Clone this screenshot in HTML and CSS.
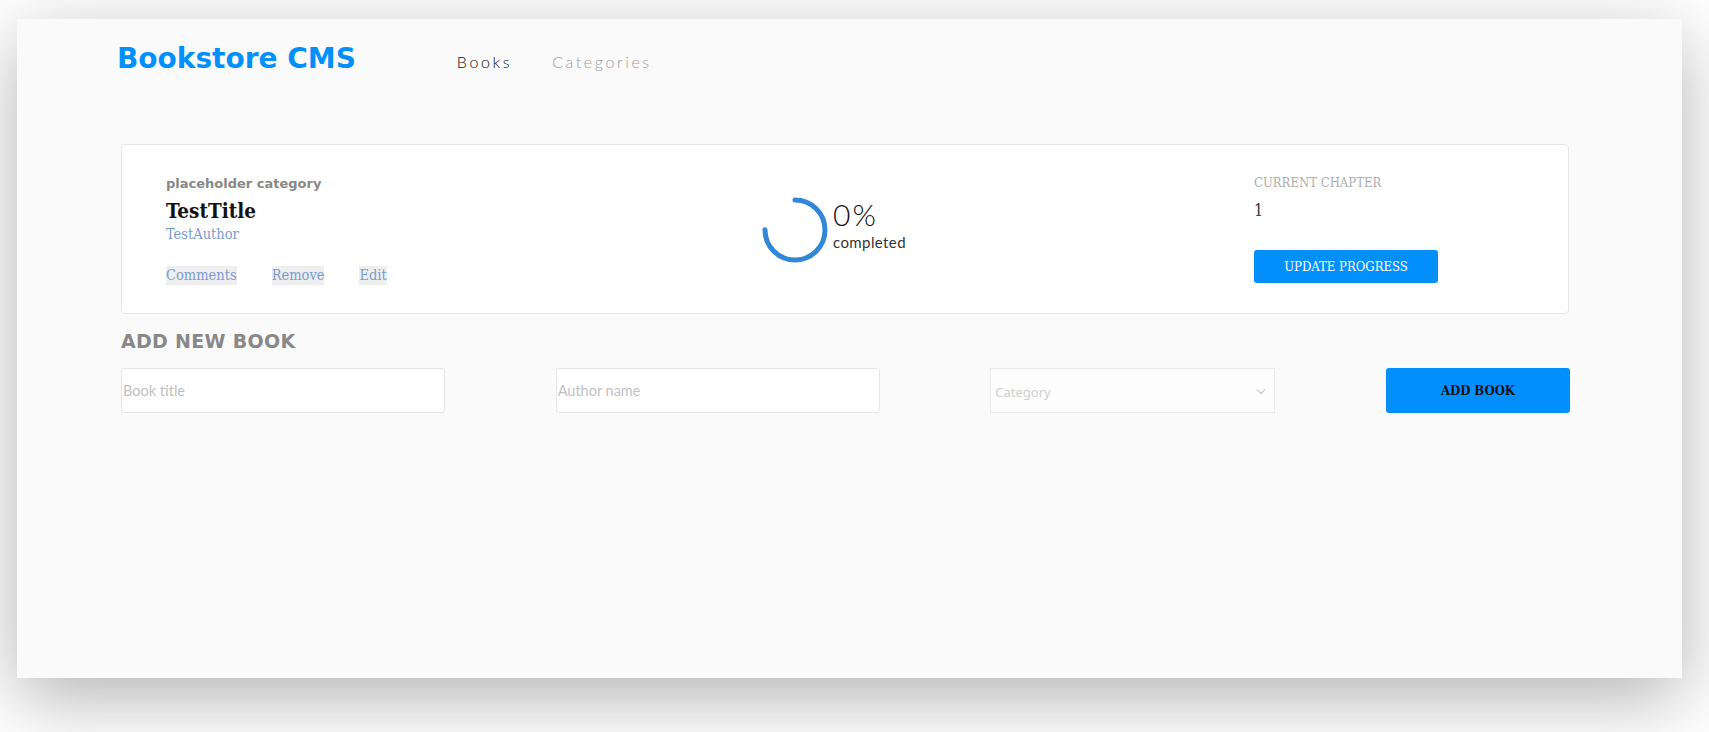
FILE: index.html
```html
<!DOCTYPE html>
<html lang="en">
<head>
<meta charset="utf-8">
<title>Bookstore CMS</title>
<link rel="stylesheet" href="styles.css">
</head>
<body>
<div class="panel">
  <header class="header">
    <h1 class="logo">Bookstore CMS</h1>
    <nav class="nav">
      <a class="nav-link active" href="#">Books</a>
      <a class="nav-link" href="#">Categories</a>
    </nav>
  </header>
  <main class="main">
    <div class="card">
      <div class="book-info">
        <p class="category">placeholder category</p>
        <h2 class="title">TestTitle</h2>
        <p class="author">TestAuthor</p>
        <div class="actions">
          <button class="action" type="button">Comments</button>
          <button class="action" type="button">Remove</button>
          <button class="action" type="button">Edit</button>
        </div>
      </div>
      <div class="progress">
        <svg class="ring" width="66" height="66" viewBox="0 0 66 66">
          <circle cx="33" cy="33" r="30" fill="none" stroke="#3287d8" stroke-width="5" stroke-linecap="round" stroke-dasharray="141.4 200" transform="rotate(-90 33 33)"/>
        </svg>
        <div class="progress-text">
          <span class="percent">0%</span>
          <span class="completed">completed</span>
        </div>
      </div>
      <div class="chapter">
        <p class="chapter-label">CURRENT CHAPTER</p>
        <p class="chapter-num">1</p>
        <button class="update-btn" type="button">UPDATE PROGRESS</button>
      </div>
    </div>
    <section class="add-book">
      <h3 class="add-title">ADD NEW BOOK</h3>
      <form class="add-form">
        <input class="field field-title" type="text" placeholder="Book title">
        <input class="field field-author" type="text" placeholder="Author name">
        <div class="select-wrap">
          <span class="select-placeholder">Category</span>
          <svg class="chevron" width="10" height="7" viewBox="0 0 10 7"><path d="M1 1.5 L5 5.5 L9 1.5" fill="none" stroke="#cfcfcf" stroke-width="1.4"/></svg>
        </div>
        <button class="add-btn" type="button">ADD BOOK</button>
      </form>
    </section>
  </main>
</div>
</body>
</html>
```
FILE: styles.css
```css
* { box-sizing: border-box; }
html, body { margin: 0; padding: 0; }
body {
  background: #ffffff;
  padding: 19px 27px 0 17px;
  height: 732px;
  overflow: hidden;
  font-family: "Lato", "Inter", sans-serif;
}
.panel {
  width: 1665px;
  height: 659px;
  background: #fafafa;
  box-shadow: 0 20px 70px rgba(0, 0, 0, 0.3);
}
.header {
  display: flex;
  align-items: baseline;
  padding: 23px 0 0 100px;
}
.logo {
  margin: 0;
  font-family: "DejaVu Sans", sans-serif;
  font-weight: 700;
  font-size: 28px;
  line-height: 34px;
  color: #0290ff;
}
.nav {
  display: flex;
  gap: 40px;
  margin-left: 101px;
}
.nav-link {
  font-family: "Lato", sans-serif;
  font-weight: 300;
  font-size: 16px;
  line-height: 20px;
  letter-spacing: 2.6px;
  color: #9a9a9a;
  text-decoration: none;
}
.nav-link.active { color: #121212; }

.main {
  padding: 68px 0 0 104px;
  width: 1552px;
}
.card {
  display: grid;
  grid-template-columns: 598px 490px 1fr;
  align-items: center;
  background: #fff;
  border: 1px solid #e8e8e8;
  border-radius: 4px;
  padding: 30px 45px 28px 44px;
  height: 170px;
}
.book-info p, .chapter p { margin: 0; }
.category {
  font-family: "DejaVu Sans", sans-serif;
  font-weight: 700;
  font-size: 13px;
  line-height: 17px;
  color: #888;
}
.title {
  margin: 7px 0 0;
  font-family: "DejaVu Serif", serif;
  font-stretch: condensed;
  font-weight: 700;
  font-size: 20.5px;
  line-height: 24px;
  color: #121212;
}
.author {
  margin-top: 3px !important;
  font-family: "DejaVu Serif", serif;
  font-stretch: condensed;
  font-size: 14.5px;
  line-height: 16px;
  color: #7a9bd0;
}
.actions {
  display: flex;
  gap: 35px;
  margin-top: 24px;
}
.action {
  border: 0;
  margin: 0;
  padding: 0;
  background: #eeeeee;
  font-family: "DejaVu Serif", serif;
  font-stretch: condensed;
  font-size: 14.5px;
  line-height: 19px;
  height: 19px;
  color: #7a9bd0;
}
.progress {
  display: flex;
  align-items: flex-start;
  gap: 5px;
  margin-left: -2px;
}
.ring { display: block; flex: none; }
.progress-text {
  display: flex;
  flex-direction: column;
}
.percent {
  font-family: "Lato", sans-serif;
  font-weight: 300;
  font-size: 30px;
  line-height: 34px;
  letter-spacing: 2px;
  color: #121212;
}
.completed {
  margin-top: 2px;
  font-family: "Lato", sans-serif;
  font-weight: 400;
  font-size: 15px;
  line-height: 18px;
  letter-spacing: 0.4px;
  color: #333;
}
.chapter {
  display: flex;
  flex-direction: column;
  align-items: flex-start;
  align-self: start;
}
.chapter-label {
  font-family: "DejaVu Serif", serif;
  font-stretch: condensed;
  font-size: 13px;
  line-height: 16px;
  color: #adadad;
}
.chapter-num {
  margin-top: 10px !important;
  font-family: "DejaVu Serif", serif;
  font-stretch: condensed;
  font-size: 16px;
  line-height: 20px;
  color: #333;
}
.update-btn {
  margin-top: 29px;
  width: 184px;
  height: 33px;
  border: 0;
  border-radius: 3px;
  background: #0290ff;
  color: #fff;
  font-family: "DejaVu Serif", serif;
  font-stretch: condensed;
  font-size: 13px;
  padding: 0;
}

.add-book { padding-top: 15px; }
.add-title {
  margin: 0;
  font-family: "DejaVu Sans", sans-serif;
  font-weight: 700;
  font-size: 19px;
  line-height: 24px;
  letter-spacing: 0.3px;
  color: #888;
}
.add-form {
  display: flex;
  justify-content: space-between;
  align-items: center;
  margin-top: 15px;
  width: 1449px;
}
.field {
  height: 45px;
  border: 1px solid #e6e6e6;
  border-radius: 3px;
  background: #fff;
  padding: 0 1px;
  font-family: "Lato", sans-serif;
  font-size: 14.5px;
  color: #333;
}
.field::placeholder { color: #c2c2c2; }
.field-title { width: 324px; }
.field-author { width: 324px; }
.select-wrap {
  width: 285px;
  height: 45px;
  border: 1px solid #ebebeb;
  background: #fdfdfd;
  display: flex;
  align-items: center;
  justify-content: space-between;
  padding: 2px 8px 0 4px;
}
.select-placeholder {
  font-family: "Noto Sans", sans-serif;
  font-size: 13px;
  color: #cfcfcf;
}
.add-btn {
  width: 184px;
  height: 45px;
  border: 0;
  border-radius: 3px;
  background: #0290ff;
  color: #121212;
  font-family: "DejaVu Serif", serif;
  font-stretch: condensed;
  font-weight: 700;
  font-size: 13px;
  padding: 0;
}
```
